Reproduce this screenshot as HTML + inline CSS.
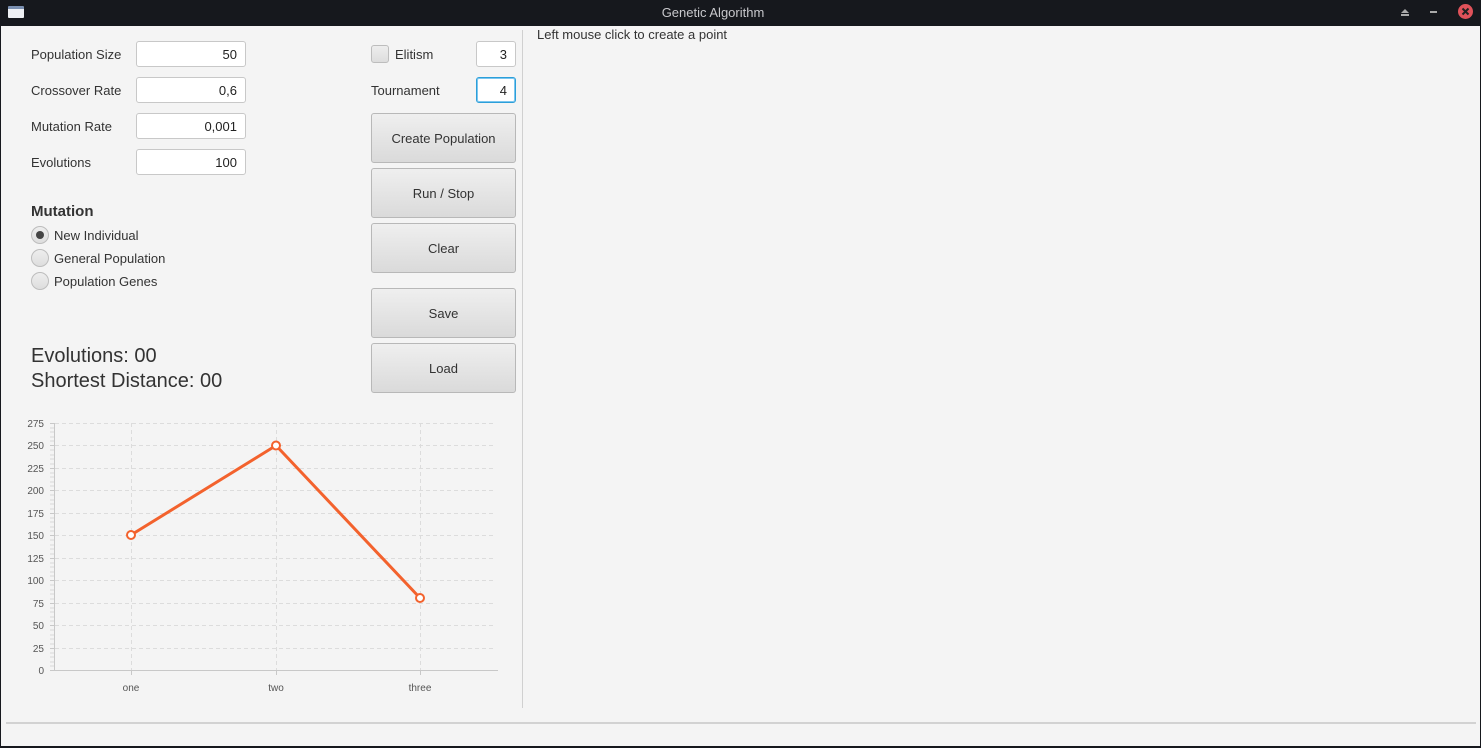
<!DOCTYPE html>
<html><head><meta charset="utf-8">
<style>
*{margin:0;padding:0;box-sizing:border-box}
html,body{width:1481px;height:748px;overflow:hidden;background:#16181d;font-family:"Liberation Sans","DejaVu Sans",sans-serif;color:#333}
.abs{position:absolute}
#content{position:absolute;left:1px;top:26px;width:1479px;height:720px;background:#f4f4f4}
.lbl{position:absolute;font-size:13px;color:#333;line-height:16px}
.tf{position:absolute;background:#fff;border:1px solid #c8c8c8;border-radius:3px;font-size:13px;text-align:right;padding-right:8px;line-height:26px;height:26px;color:#222}
.btn{position:absolute;left:371px;width:145px;height:50px;border:1px solid #b8b8b8;border-radius:3px;background:linear-gradient(#efefef,#dadada);font-size:13px;text-align:center;line-height:50px;color:#333}
.radio{position:absolute;left:31px;width:18px;height:18px;border-radius:50%;border:1px solid #bdbdbd;background:linear-gradient(#eee,#ddd)}
</style></head><body>
<div class="abs" style="left:8px;top:6px;width:16px;height:12px;background:#eef0f4;border-top:3px solid #7a8fb0;border-radius:1px"></div>
<div class="abs" style="left:613px;top:5px;width:200px;text-align:center;font-size:13px;color:#c8c8cc;line-height:16px">Genetic Algorithm</div>
<div class="abs" style="left:1401px;top:9px;width:0;height:0;border-left:4px solid transparent;border-right:4px solid transparent;border-bottom:4px solid #aaa"></div>
<div class="abs" style="left:1401px;top:14px;width:8px;height:2px;background:#aaa"></div>
<div class="abs" style="left:1430px;top:11px;width:7px;height:2px;background:#aaa"></div>
<div class="abs" style="left:1458px;top:4px;width:15px;height:15px;border-radius:50%;background:#e0525a"></div>
<svg class="abs" style="left:1458px;top:4px" width="15" height="15"><path d="M4.5 4.5l6 6M10.5 4.5l-6 6" stroke="#222" stroke-width="2"/></svg>

<div id="content"></div>

<div class="lbl" style="left:31px;top:47px">Population Size</div>
<div class="lbl" style="left:31px;top:83px">Crossover Rate</div>
<div class="lbl" style="left:31px;top:119px">Mutation Rate</div>
<div class="lbl" style="left:31px;top:155px">Evolutions</div>
<div class="tf" style="left:136px;top:41px;width:110px">50</div>
<div class="tf" style="left:136px;top:77px;width:110px">0,6</div>
<div class="tf" style="left:136px;top:113px;width:110px">0,001</div>
<div class="tf" style="left:136px;top:149px;width:110px">100</div>

<div class="lbl" style="left:31px;top:203px;font-size:15px;font-weight:bold;line-height:18px">Mutation</div>
<div class="radio" style="top:226px"><div class="abs" style="left:4px;top:4px;width:8px;height:8px;border-radius:50%;background:#444"></div></div>
<div class="radio" style="top:249px"></div>
<div class="radio" style="top:272px"></div>
<div class="lbl" style="left:54px;top:228px">New Individual</div>
<div class="lbl" style="left:54px;top:251px">General Population</div>
<div class="lbl" style="left:54px;top:274px">Population Genes</div>

<div class="lbl" style="left:31px;top:344px;font-size:20px;line-height:24px">Evolutions: 00</div>
<div class="lbl" style="left:31px;top:369px;font-size:20px;line-height:24px">Shortest Distance: 00</div>

<div class="abs" style="left:371px;top:45px;width:18px;height:18px;border:1px solid #bdbdbd;border-radius:3px;background:linear-gradient(#eee,#ddd)"></div>
<div class="lbl" style="left:395px;top:47px">Elitism</div>
<div class="lbl" style="left:371px;top:83px">Tournament</div>
<div class="tf" style="left:476px;top:41px;width:40px">3</div>
<div class="tf" style="left:476px;top:77px;width:40px;border:1px solid #2c9fd9;box-shadow:0 0 0 1px #7cc6ef inset">4</div>

<div class="btn" style="top:113px">Create Population</div>
<div class="btn" style="top:168px">Run / Stop</div>
<div class="btn" style="top:223px">Clear</div>
<div class="btn" style="top:288px">Save</div>
<div class="btn" style="top:343px">Load</div>

<div class="abs" style="left:522px;top:30px;width:1px;height:678px;background:#d0d0d0"></div>
<div class="lbl" style="left:537px;top:27px">Left mouse click to create a point</div>
<div class="abs" style="left:6px;top:722px;width:1470px;height:2px;background:#d2d2d2"></div>

<svg class="abs" style="left:0;top:400px" width="520" height="310" font-family="Liberation Sans, sans-serif">
<g stroke="#dcdcdc" stroke-dasharray="4,3" stroke-width="1">
<line x1="55" x2="494" y1="23.5" y2="23.5"/><line x1="55" x2="494" y1="45.5" y2="45.5"/><line x1="55" x2="494" y1="68.5" y2="68.5"/><line x1="55" x2="494" y1="90.5" y2="90.5"/><line x1="55" x2="494" y1="113.5" y2="113.5"/><line x1="55" x2="494" y1="135.5" y2="135.5"/><line x1="55" x2="494" y1="158.5" y2="158.5"/><line x1="55" x2="494" y1="180.5" y2="180.5"/><line x1="55" x2="494" y1="203.5" y2="203.5"/><line x1="55" x2="494" y1="225.5" y2="225.5"/><line x1="55" x2="494" y1="248.5" y2="248.5"/>
<line x1="131.5" x2="131.5" y1="23" y2="270"/><line x1="276.5" x2="276.5" y1="23" y2="270"/><line x1="420.5" x2="420.5" y1="23" y2="270"/>
</g>
<g stroke="#c8c8c8" stroke-width="1">
<line x1="54.5" x2="54.5" y1="23" y2="270"/><line x1="54" x2="498" y1="270.5" y2="270.5"/>
<path d="M50 23.5h5M50 45.5h5M50 68.5h5M50 90.5h5M50 113.5h5M50 135.5h5M50 158.5h5M50 180.5h5M50 203.5h5M50 225.5h5M50 248.5h5M50 270.5h5M131.5 270v5M276.5 270v5M420.5 270v5"/>
<path stroke="#d8d8d8" d="M50 28h4M50 32h4M50 37h4M50 41h4M50 50h4M50 55h4M50 59h4M50 64h4M50 73h4M50 77h4M50 82h4M50 86h4M50 95h4M50 100h4M50 104h4M50 109h4M50 118h4M50 122h4M50 127h4M50 131h4M50 140h4M50 145h4M50 149h4M50 154h4M50 163h4M50 167h4M50 172h4M50 176h4M50 185h4M50 190h4M50 194h4M50 199h4M50 208h4M50 212h4M50 217h4M50 221h4M50 230h4M50 235h4M50 239h4M50 244h4M50 253h4M50 257h4M50 262h4M50 266h4"/>
</g>
<g font-size="10" fill="#555" text-anchor="end">
<text x="44" y="27">275</text><text x="44" y="49">250</text><text x="44" y="72">225</text><text x="44" y="94">200</text><text x="44" y="117">175</text><text x="44" y="139">150</text><text x="44" y="162">125</text><text x="44" y="184">100</text><text x="44" y="207">75</text><text x="44" y="229">50</text><text x="44" y="252">25</text><text x="44" y="274">0</text>
</g>
<g font-size="10" fill="#555" text-anchor="middle">
<text x="131" y="291">one</text><text x="276" y="291">two</text><text x="420" y="291">three</text>
</g>
<polyline points="131,135 276,45.5 420,198" fill="none" stroke="#f3622d" stroke-width="3"/>
<g fill="#fff" stroke="#f3622d" stroke-width="2">
<circle cx="131" cy="135" r="4"/><circle cx="276" cy="45.5" r="4"/><circle cx="420" cy="198" r="4"/>
</g>
</svg>
</body></html>
